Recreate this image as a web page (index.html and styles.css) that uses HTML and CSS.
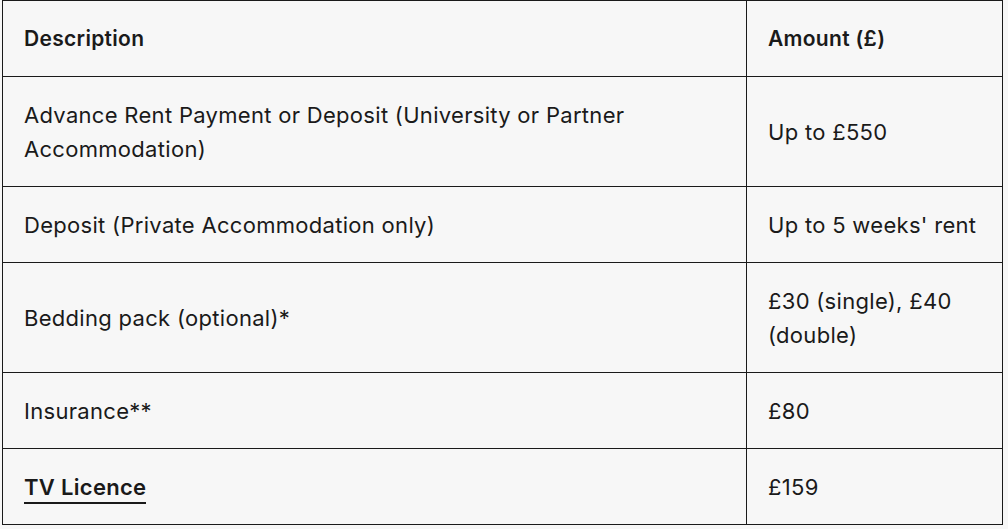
FILE: index.html
```html
<!DOCTYPE html>
<html lang="en">
<head>
<meta charset="utf-8">
<title>Costs</title>
<link rel="stylesheet" href="styles.css">
</head>
<body>
<table class="costs">
  <thead>
    <tr>
      <th class="col-desc">Description</th>
      <th class="col-amt">Amount (£)</th>
    </tr>
  </thead>
  <tbody>
    <tr>
      <td>Advance Rent Payment or Deposit (University or Partner Accommodation)</td>
      <td>Up to £550</td>
    </tr>
    <tr>
      <td>Deposit (Private Accommodation only)</td>
      <td>Up to 5 weeks' rent</td>
    </tr>
    <tr>
      <td>Bedding pack (optional)*</td>
      <td>£30 (single), £40 (double)</td>
    </tr>
    <tr>
      <td>Insurance**</td>
      <td>£80</td>
    </tr>
    <tr>
      <td><a class="link" href="#">TV Licence</a></td>
      <td>£159</td>
    </tr>
  </tbody>
</table>
</body>
</html>
```
FILE: styles.css
```css
html, body {
  margin: 0;
  padding: 0;
  background: #f7f7f7;
}
body {
  padding: 0 0 0 2px;
  font-family: Inter, "Noto Sans", sans-serif;
  color: #1a1a1a;
}
.costs {
  border-collapse: collapse;
  width: 1001px;
  font-size: 22px;
  line-height: 34px;
  letter-spacing: 0.3px;
}
.costs th, .costs td {
  border: 1px solid #1a1a1a;
  padding: 20.5px 21px;
  text-align: left;
  vertical-align: middle;
}
.costs th {
  font-weight: 600;
  font-size: 21px;
  letter-spacing: 0.3px;
}
.col-desc { width: 701px; }
.link {
  color: #1a1a1a;
  font-weight: 600;
  text-decoration: none;
  border-bottom: 2px solid #1a1a1a;
  padding-bottom: 2px;
}
```
